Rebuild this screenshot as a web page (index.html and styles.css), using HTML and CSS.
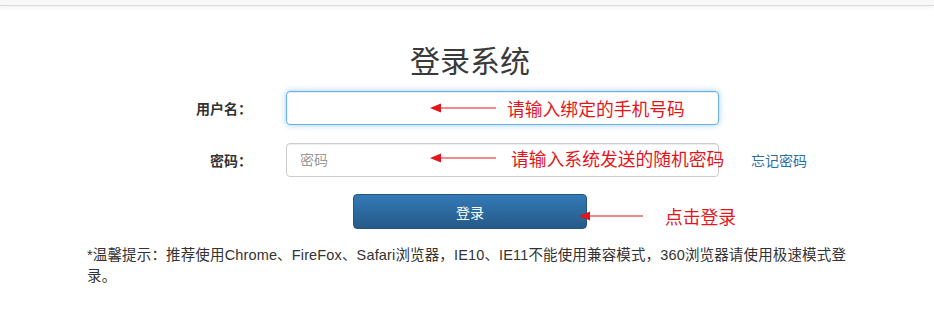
FILE: index.html
```html
<!DOCTYPE html>
<html lang="zh-CN">
  <head>
    <meta charset="UTF-8" />
    <title>登录系统</title>
    <link rel="stylesheet" href="styles.css">
  </head>
  <body>
    <div class="topbar"></div>
    <div class="container">
      <h2 class="title">登录系统</h2>
      <form class="login-form">
        <div class="form-row">
          <label class="form-label">用户名：</label>
          <input type="text" class="form-input focus" />
          <div class="note note-user">
            <svg class="arrow" width="66" height="10" viewBox="0 0 66 10">
              <line x1="8" y1="5" x2="66" y2="5" stroke="#e5141b" stroke-width="1.2" />
              <polygon points="0,5 11,0.5 11,9.5" fill="#e5141b" />
            </svg>
            <span>请输入绑定的手机号码</span>
          </div>
        </div>
        <div class="form-row">
          <label class="form-label">密码：</label>
          <input type="password" class="form-input" placeholder="密码" />
          <a class="forget" href="#">忘记密码</a>
          <div class="note note-pass">
            <svg class="arrow" width="66" height="10" viewBox="0 0 66 10">
              <line x1="8" y1="5" x2="66" y2="5" stroke="#e5141b" stroke-width="1.2" />
              <polygon points="0,5 11,0.5 11,9.5" fill="#e5141b" />
            </svg>
            <span>请输入系统发送的随机密码</span>
          </div>
        </div>
        <div class="btn-row">
          <button type="button" class="btn-login">登录</button>
          <div class="note note-btn">
            <svg class="arrow" width="64" height="10" viewBox="0 0 64 10">
              <line x1="8" y1="5" x2="64" y2="5" stroke="#e5141b" stroke-width="1.2" />
              <polygon points="0,5 11,0.5 11,9.5" fill="#e5141b" />
            </svg>
            <span>点击登录</span>
          </div>
        </div>
      </form>
      <p class="tips">*温馨提示：推荐使用Chrome、FireFox、Safari浏览器，IE10、IE11不能使用兼容模式，360浏览器请使用极速模式登录。</p>
    </div>
  </body>
</html>
```

FILE: styles.css
```css
* {
  margin: 0;
  padding: 0;
  box-sizing: border-box;
}
body {
  background: #fff;
  color: #333;
  font-family: "Liberation Sans", "Noto Sans CJK SC", sans-serif;
  font-size: 14px;
}
.topbar {
  height: 6px;
  background: #f8f8f8;
  border-bottom: 1px solid #dcdcdc;
  box-shadow: 0 2px 4px rgba(0, 0, 0, 0.05);
}
.container {
  width: 766px;
  margin-left: 87px;
}
.title {
  margin-top: 39px;
  text-align: center;
  font-size: 30px;
  font-weight: normal;
  line-height: 34px;
  color: #3a3a3a;
}
.login-form {
  margin-top: 12px;
}
.form-row {
  position: relative;
  display: flex;
  align-items: center;
  gap: 34px;
  height: 34px;
  margin-bottom: 18px;
}
.form-label {
  width: 165px;
  text-align: right;
  font-weight: bold;
  font-size: 14px;
  color: #333;
}
.form-input {
  width: 433px;
  height: 34px;
  padding: 6px 13px;
  border: 1px solid #ccc;
  border-radius: 4px;
  font-size: 14px;
  color: #555;
  outline: none;
  box-shadow: inset 0 1px 1px rgba(0, 0, 0, 0.075);
  font-family: "Liberation Sans", "Noto Sans CJK SC", sans-serif;
}
.form-input::placeholder {
  color: #999;
}
.form-input.focus {
  border-color: #66afe9;
  box-shadow: inset 0 1px 1px rgba(0, 0, 0, 0.075), 0 0 6px rgba(102, 175, 233, 0.6);
}
.forget {
  margin-left: -2px;
  color: #2f6ea3;
  text-decoration: none;
  font-size: 14px;
}
.btn-row {
  position: relative;
  display: flex;
  justify-content: center;
  margin-top: -1px;
}
.btn-login {
  width: 234px;
  height: 35px;
  border: 1px solid #245580;
  border-radius: 4px;
  background: linear-gradient(to bottom, #337ab7 0, #265a88 100%);
  color: #fff;
  font-size: 14px;
  font-family: "Liberation Sans", "Noto Sans CJK SC", sans-serif;
}
.note {
  position: absolute;
  display: flex;
  align-items: center;
  gap: 13px;
  color: #e5141b;
  font-size: 17.8px;
  white-space: nowrap;
}
.note .arrow {
  display: block;
}
.note-user {
  left: 343px;
  top: 4px;
  gap: 11px;
}
.note-pass {
  left: 343px;
  top: 2px;
  gap: 15px;
}
.note-btn {
  left: 492px;
  top: 9px;
  gap: 22px;
}
.tips {
  margin-top: 16px;
  line-height: 21px;
  font-size: 14.5px;
  letter-spacing: 0.15px;
  color: #333;
}
```
